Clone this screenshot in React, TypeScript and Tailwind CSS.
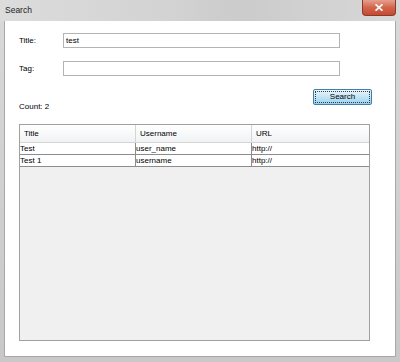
export default function App() {
  const rows = [
    { title: "Test", username: "user_name", url: "http://" },
    { title: "Test 1", username: "username", url: "http://" },
  ];

  return (
    <div className="w-[400px] h-[362px] flex flex-col bg-gradient-to-b from-[#d9d9d9] to-[#c8c8c8] font-['Liberation_Sans',sans-serif] text-[8px] text-black overflow-hidden">
      {/* Title bar */}
      <div className="h-[21px] shrink-0 flex items-start justify-between bg-[linear-gradient(90deg,#dcdcdc_0%,#d2d2d2_45%,#cbcbcb_60%,#d8d8d8_100%)]">
        <span className="ml-[5px] mt-[6px] text-[8.5px] leading-none text-[#1e1e1e]">Search</span>
        <div className="mr-[4px] w-[34px] h-[16px] rounded-b-[4px] border border-t-0 border-[#8a3a2a] bg-gradient-to-b from-[#e5a08e] via-[#d2644b] to-[#c54a30] flex items-center justify-center">
          <svg width="8" height="7" viewBox="0 0 8 7">
            <path d="M1.2 0.8 L6.8 6.2 M6.8 0.8 L1.2 6.2" stroke="#f4f4f4" strokeWidth="1.8" strokeLinecap="square" />
          </svg>
        </div>
      </div>

      {/* Client area */}
      <div className="flex-1 mx-[4px] mb-[5px] bg-white border border-[#a8a8a8] border-t-0 flex flex-col">
        <div className="flex items-center mt-[12px] h-[15px]">
          <span className="ml-[14px] w-[44px]">Title:</span>
          <div className="w-[277px] h-[15px] border border-[#b4b4b4] bg-white flex items-center pl-[2px] leading-none">test</div>
        </div>
        <div className="flex items-center mt-[13px] h-[15px]">
          <span className="ml-[14px] w-[44px]">Tag:</span>
          <div className="w-[277px] h-[15px] border border-[#b4b4b4] bg-white" />
        </div>
        <div className="flex justify-end mt-[13px] mr-[23px]">
          <button className="w-[59px] h-[16px] border border-[#3c7fb1] rounded-[2px] bg-gradient-to-b from-[#eaf6fd] via-[#c4e5f6] to-[#98d1ef] flex items-center justify-center p-[1px]">
            <span className="w-full h-full border border-dotted border-[#3a3a3a] flex items-center justify-center leading-none text-[8px]">Search</span>
          </button>
        </div>
        <div className="ml-[14px] mt-[-2px] leading-none">Count: 2</div>

        {/* Table */}
        <div className="ml-[14px] mt-[13px] w-[351px] h-[217px] border border-[#a0a0a0] bg-[#f0f0f0] flex flex-col">
          <div className="h-[18px] flex bg-gradient-to-b from-white to-[#f1f2f4] border-b border-[#d5d5d5]">
            <div className="w-[116px] border-r border-[#d5d5d5] pl-[4px] flex items-center">Title</div>
            <div className="w-[116px] border-r border-[#d5d5d5] pl-[4px] flex items-center">Username</div>
            <div className="flex-1 pl-[4px] flex items-center">URL</div>
          </div>
          {rows.map((r) => (
            <div key={r.title} className="h-[12px] flex bg-white border-b border-[#8c8c8c] leading-none">
              <div className="w-[116px] border-r border-[#8c8c8c] flex items-center">{r.title}</div>
              <div className="w-[116px] border-r border-[#8c8c8c] flex items-center">{r.username}</div>
              <div className="flex-1 flex items-center">{r.url}</div>
            </div>
          ))}
        </div>
      </div>
    </div>
  );
}
